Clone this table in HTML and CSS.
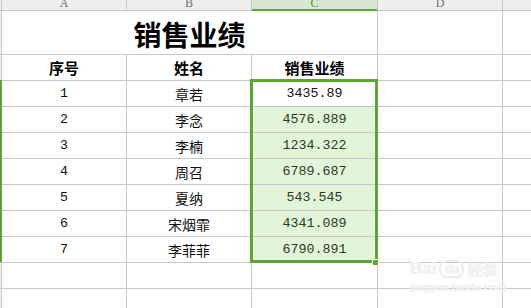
FILE: index.html
```html
<!DOCTYPE html>
<html>
<head>
<meta charset="utf-8">
<link rel="stylesheet" href="styles.css">
</head>
<body>
<div class="sheet">
  <div class="grid">
    <div class="rh hdr"></div>
    <div class="ch"><span>A</span></div>
    <div class="ch"><span>B</span></div>
    <div class="ch ch-sel"><span>C</span></div>
    <div class="ch"><span>D</span></div>
    <div class="ch"></div>

    <div class="rh"></div>
    <div class="cell title">销售业绩</div>
    <div class="cell"></div>
    <div class="cell"></div>

    <div class="rh"></div>
    <div class="cell th">序号</div>
    <div class="cell th">姓名</div>
    <div class="cell th">销售业绩</div>
    <div class="cell"></div>
    <div class="cell"></div>

    <div class="rh"></div>
    <div class="cell num">1</div>
    <div class="cell cn">章若</div>
    <div class="cell num active">3435.89</div>
    <div class="cell"></div>
    <div class="cell"></div>

    <div class="rh"></div>
    <div class="cell num">2</div>
    <div class="cell cn">李念</div>
    <div class="cell num sel">4576.889</div>
    <div class="cell"></div>
    <div class="cell"></div>

    <div class="rh"></div>
    <div class="cell num">3</div>
    <div class="cell cn">李楠</div>
    <div class="cell num sel">1234.322</div>
    <div class="cell"></div>
    <div class="cell"></div>

    <div class="rh"></div>
    <div class="cell num">4</div>
    <div class="cell cn">周召</div>
    <div class="cell num sel">6789.687</div>
    <div class="cell"></div>
    <div class="cell"></div>

    <div class="rh"></div>
    <div class="cell num">5</div>
    <div class="cell cn">夏纳</div>
    <div class="cell num sel">543.545</div>
    <div class="cell"></div>
    <div class="cell"></div>

    <div class="rh"></div>
    <div class="cell num">6</div>
    <div class="cell cn">宋烟霏</div>
    <div class="cell num sel">4341.089</div>
    <div class="cell"></div>
    <div class="cell"></div>

    <div class="rh"></div>
    <div class="cell num">7</div>
    <div class="cell cn">李菲菲</div>
    <div class="cell num sel">6790.891</div>
    <div class="cell"></div>
    <div class="cell"></div>

    <div class="rh"></div>
    <div class="cell"></div>
    <div class="cell"></div>
    <div class="cell"></div>
    <div class="cell"></div>
    <div class="cell"></div>

    <div class="rh"></div>
    <div class="cell"></div>
    <div class="cell"></div>
    <div class="cell"></div>
    <div class="cell"></div>
    <div class="cell"></div>
  </div>

  <div class="row-mark"></div>
  <div class="selection"></div>
  <div class="handle"></div>

  <div class="watermark">
    <div class="wm-top"><span class="wm-bai">Bai</span><span class="wm-du">du</span><span class="wm-cn">经验</span></div>
    <div class="wm-url">jingyan.baidu.com</div>
  </div>
</div>
</body>
</html>
```

FILE: styles.css
```css
html, body {
  margin: 0;
  padding: 0;
  background: #ffffff;
}

.sheet {
  position: relative;
  width: 531px;
  height: 308px;
  overflow: hidden;
  font-family: "Noto Sans CJK SC", "Liberation Sans", sans-serif;
  color: #111;
}

.grid {
  display: grid;
  grid-template-columns: 1px 124px 124px 125px 124px 1fr;
  grid-template-rows: 10px 43px 25px repeat(7, 25px) 25px 1fr;
  gap: 1px;
  background: #c8c8c8;
  height: 308px;
}

.rh {
  background: #efefef;
}

.ch {
  background: #efefef;
  overflow: hidden;
  position: relative;
  text-align: center;
  font-family: "Liberation Serif", serif;
  font-size: 12px;
  color: #6d6d6d;
}

.ch span {
  display: block;
  line-height: 12px;
  margin-top: -3px;
}

.ch-sel {
  background: #d9e6d0;
  color: #4f8f30;
  border-bottom: 1px solid #5fa33a;
  box-sizing: border-box;
  box-shadow: 0 1px 0 #5fa33a;
}

.cell {
  background: #ffffff;
  display: flex;
  align-items: center;
  justify-content: center;
  white-space: nowrap;
}

.title {
  grid-column: span 3;
  font-size: 28px;
  font-weight: bold;
  color: #000;
  padding-top: 2px;
  box-sizing: border-box;
}

.th {
  font-size: 15px;
  font-weight: bold;
  color: #000;
}

.cn {
  font-size: 14px;
  color: #111;
}

.num {
  font-family: "Liberation Mono", monospace;
  font-size: 13.33px;
  color: #111;
}

.sel {
  background: #e2f5d8;
  color: #2c3a28;
}

.active {
  background: #ffffff;
}

.row-mark {
  position: absolute;
  left: 0;
  top: 80px;
  width: 2px;
  height: 182px;
  background: #5fa33a;
}

.selection {
  position: absolute;
  left: 250px;
  top: 79px;
  width: 128px;
  height: 184px;
  box-sizing: border-box;
  border: 3px solid #5fa33a;
}

.handle {
  position: absolute;
  left: 372px;
  top: 259px;
  width: 7px;
  height: 7px;
  box-sizing: border-box;
  background: #5fa33a;
  border: 1px solid #ffffff;
}

.watermark {
  position: absolute;
  left: 410px;
  top: 258px;
  color: #f3f3f3;
  font-family: "Liberation Sans", sans-serif;
  pointer-events: none;
}

.wm-top {
  display: flex;
  align-items: center;
  gap: 3px;
  font-size: 17px;
  font-weight: bold;
  line-height: 22px;
  text-shadow: 0 0 1px #e0e0e0;
}

.wm-du {
  font-size: 12px;
  border: 2px solid #ececec;
  border-radius: 8px;
  padding: 0 3px;
  line-height: 14px;
}

.wm-cn {
  font-family: "Noto Sans CJK SC", sans-serif;
  font-size: 15px;
}

.wm-url {
  font-size: 11px;
  font-weight: bold;
  line-height: 14px;
  text-shadow: 0 0 1px #e0e0e0;
}
```
